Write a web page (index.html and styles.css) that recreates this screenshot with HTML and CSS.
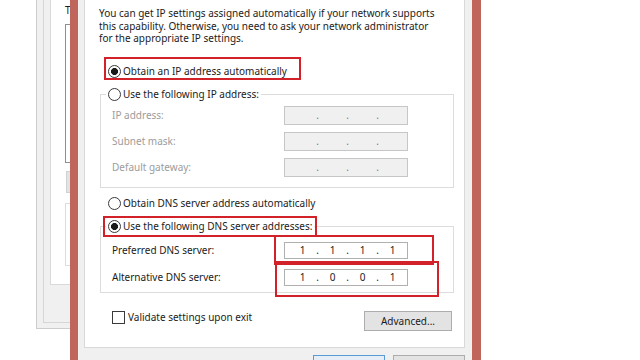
FILE: index.html
```html
<!DOCTYPE html>
<html>
<head>
<meta charset="utf-8">
<link rel="stylesheet" href="styles.css">
</head>
<body>
<div class="screen">
  <div class="bgwin">
    <div class="bgwin-inner">
      <div class="bgtab">
        <div class="bg-label">This connection uses the following items:</div>
        <div class="bg-list"></div>
        <div class="bg-btn"></div>
        <div class="bg-group"></div>
      </div>
    </div>
  </div>
  <div class="dialog">
    <div class="panel">
      <p class="desc">You can get IP settings assigned automatically if your network supports<br>this capability. Otherwise, you need to ask your network administrator<br>for the appropriate IP settings.</p>
      <div class="radio-row top-radio"><span class="radio checked"></span><span class="rtext">Obtain an IP address automatically</span></div>
      <fieldset class="group">
        <legend class="legend"><span class="radio-row"><span class="radio"></span><span class="rtext">Use the following IP address:</span></span></legend>
        <div class="rows ip-rows">
          <div class="field-row disabled"><span class="flabel">IP address:</span><span class="ipbox"><i></i><i>.</i><i></i><i>.</i><i></i><i>.</i><i></i></span></div>
          <div class="field-row disabled"><span class="flabel">Subnet mask:</span><span class="ipbox"><i></i><i>.</i><i></i><i>.</i><i></i><i>.</i><i></i></span></div>
          <div class="field-row disabled"><span class="flabel">Default gateway:</span><span class="ipbox"><i></i><i>.</i><i></i><i>.</i><i></i><i>.</i><i></i></span></div>
        </div>
      </fieldset>
      <div class="radio-row dns-radio"><span class="radio"></span><span class="rtext">Obtain DNS server address automatically</span></div>
      <fieldset class="group dns-group">
        <legend class="legend"><span class="radio-row"><span class="radio checked"></span><span class="rtext">Use the following DNS server addresses:</span></span></legend>
        <div class="rows dns-rows">
          <div class="field-row"><span class="flabel">Preferred DNS server:</span><span class="ipbox active"><i>1</i><i>.</i><i>1</i><i>.</i><i>1</i><i>.</i><i>1</i></span></div>
          <div class="field-row"><span class="flabel">Alternative DNS server:</span><span class="ipbox active"><i>1</i><i>.</i><i>0</i><i>.</i><i>0</i><i>.</i><i>1</i></span></div>
        </div>
      </fieldset>
      <div class="bottom-row">
        <div class="check-row"><span class="checkbox"></span><span class="ctext">Validate settings upon exit</span></div>
        <div class="btn adv">Advanced...</div>
      </div>
    </div>
    <div class="buttons">
      <div class="btn dlg ok">OK</div>
      <div class="btn dlg">Cancel</div>
    </div>
  </div>
  <div class="mark m1"></div>
  <div class="mark m2"></div>
  <div class="mark m3"></div>
  <div class="mark m4"></div>
</div>
</body>
</html>
```

FILE: styles.css
```css
* { box-sizing: border-box; }
html, body { margin: 0; padding: 0; }
body {
  width: 640px;
  height: 360px;
  overflow: hidden;
  background: #ffffff;
  font-family: "Noto Sans", "Open Sans", sans-serif;
  font-size: 10px;
  color: #1b1b1b;
}
.screen {
  position: relative;
  display: flex;
  width: 640px;
  height: 360px;
  padding-left: 36px;
  background: #ffffff;
  overflow: hidden;
}

/* background window on the left */
.bgwin {
  flex: none;
  width: 34px;
  height: 329px;
  background: #f0f0f0;
  border-left: 1px solid #cdcdcd;
  border-bottom: 1px solid #cdcdcd;
  overflow: hidden;
}
.bgwin-inner {
  margin-left: 6px;
  width: 300px;
  height: 323px;
  padding-left: 6px;
  border-left: 1px solid #d6d6d6;
  border-bottom: 1px solid #d6d6d6;
}
.bgtab {
  width: 290px;
  height: 285px;
  background: #ffffff;
  border-left: 1px solid #d9d9d9;
  border-bottom: 1px solid #d9d9d9;
  padding: 4px 0 0 14px;
  overflow: hidden;
}
.bg-label {
  line-height: 13px;
  white-space: nowrap;
}
.bg-list {
  margin-top: 7px;
  width: 200px;
  height: 139px;
  border: 1px solid #8f8f8f;
  background: #ffffff;
}
.bg-btn {
  margin: 8px 0 0 1px;
  width: 80px;
  height: 22px;
  background: #e3e3e3;
  border: 1px solid #d0d0d0;
}
.bg-group {
  margin-top: 10px;
  width: 200px;
  height: 63px;
  border: 1px solid #dcdcdc;
}

/* dialog */
.dialog {
  flex: none;
  width: 411px;
  height: 360px;
  background: #f0f0f0;
  border-left: 8px solid #c0655b;
  border-right: 9px solid #c0655b;
  padding: 0 7px 0 6px;
  display: flex;
  flex-direction: column;
}
.panel {
  flex: none;
  height: 348px;
  background: #ffffff;
  border: 1px solid #d9d9d9;
  border-top: none;
}
.desc {
  margin: 7px 0 0 0;
  padding-left: 14px;
  line-height: 12.5px;
  white-space: nowrap;
}
.radio-row {
  display: flex;
  align-items: center;
  height: 13px;
}
.top-radio { margin: 20px 0 0 23px; }
.radio {
  flex: none;
  width: 13px;
  height: 13px;
  border-radius: 50%;
  border: 1px solid #3a3a3a;
  background: #ffffff;
}
.radio.checked {
  background: radial-gradient(circle, #1a1a1a 0 3.2px, #ffffff 3.8px);
}
.rtext {
  margin-left: 2px;
  line-height: 13px;
  white-space: nowrap;
}
.group {
  margin: 10px 0 0 15px;
  width: 354px;
  padding: 0 0 10px 0;
  border: 1px solid #dcdcdc;
  min-width: 0;
}
.legend {
  padding: 0 2px;
  margin-left: 5px;
  height: 13px;
  line-height: 13px;
}
.rows {
  display: flex;
  flex-direction: column;
  padding-left: 11px;
}
.ip-rows { padding-top: 5px; gap: 7px; }
.dns-rows { padding-top: 9px; gap: 10px; }
.dns-group { padding-bottom: 6px; }
.field-row {
  display: flex;
  align-items: center;
}
.flabel {
  width: 172px;
  white-space: nowrap;
}
.disabled .flabel { color: #9c9c9c; }
.ipbox {
  display: flex;
  width: 124px;
  height: 19px;
  padding-left: 10px;
  border: 1px solid #c6c6c6;
  background: #f0f0f0;
  color: #777777;
  line-height: 17px;
}
.ipbox.active {
  height: 17px;
  line-height: 15px;
  border-color: #b0b0b0;
  background: #ffffff;
  color: #1b1b1b;
}
.ipbox i {
  font-style: normal;
  width: 15px;
  text-align: center;
}
.dns-radio { margin: 9px 0 0 23px; }
.bottom-row {
  display: flex;
  justify-content: space-between;
  align-items: flex-start;
  margin-top: 18px;
  padding: 0 12px 0 27px;
}
.check-row {
  display: flex;
  align-items: center;
  height: 13px;
}
.checkbox {
  width: 13px;
  height: 13px;
  border: 1px solid #3a3a3a;
  background: #ffffff;
}
.ctext {
  margin-left: 3px;
  line-height: 13px;
}
.btn {
  height: 20px;
  line-height: 18px;
  text-align: center;
  background: #e3e3e3;
  border: 1px solid #adadad;
  white-space: nowrap;
}
.adv {
  margin-top: 0;
  width: 88px;
}
.buttons {
  display: flex;
  justify-content: flex-end;
  gap: 8px;
  margin-top: 7px;
}
.btn.dlg {
  flex: none;
  width: 72px;
  height: 22px;
  line-height: 20px;
}
.btn.ok {
  border-color: #5b9bd5;
  background: #e5eef7;
}

/* red annotation boxes */
.mark {
  position: absolute;
  border: 2px solid #d3212a;
}
.m1 { left: 104px; top: 57px; width: 197px; height: 23px; }
.m2 { left: 103px; top: 216px; width: 214px; height: 21px; }
.m3 { left: 274px; top: 235px; width: 160px; height: 30px; }
.m4 { left: 275px; top: 261px; width: 164px; height: 36px; }
```
